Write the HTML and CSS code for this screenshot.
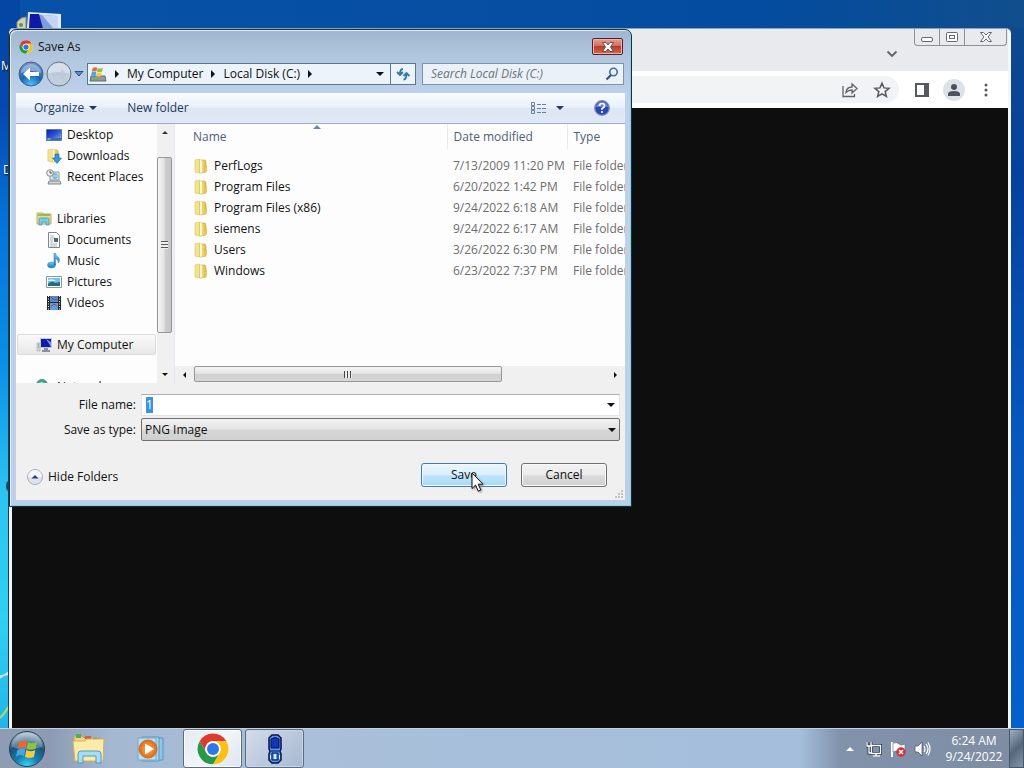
FILE: index.html
```html
<!DOCTYPE html>
<html lang="en">
<head>
    <meta charset="UTF-8">
    <meta name="viewport" content="width=device-width, initial-scale=1.0">
    <title>Save As</title>
    <link rel="stylesheet" href="styles.css">
</head>
<body>
    <!-- shared icons -->
    <svg class="defs" width="0" height="0">
        <defs>
            <linearGradient id="gold" x1="0" x2="1"><stop offset="0" stop-color="#f7eaa0"/><stop offset="1" stop-color="#dcb944"/></linearGradient>
            <linearGradient id="screen" x1="0" x2="1" y2="1"><stop offset="0" stop-color="#0c1cae"/><stop offset=".5" stop-color="#2b55d8"/><stop offset="1" stop-color="#8fb4f0"/></linearGradient>
            <linearGradient id="note" x1="0" y2="1" x2="0"><stop offset="0" stop-color="#7cc4ee"/><stop offset="1" stop-color="#1677c4"/></linearGradient>
            <radialGradient id="blueball" cx=".5" cy=".95" r=".9"><stop offset="0" stop-color="#4fc5f7"/><stop offset=".5" stop-color="#1764b4"/><stop offset="1" stop-color="#6f93c4"/></radialGradient>
            <radialGradient id="orb" cx=".5" cy="1" r=".95"><stop offset="0" stop-color="#35e0f8"/><stop offset=".35" stop-color="#1380b4"/><stop offset=".7" stop-color="#1f5277"/><stop offset="1" stop-color="#a4bccd"/></radialGradient>
            <radialGradient id="orange"><stop offset="0" stop-color="#ffb25c"/><stop offset="1" stop-color="#e06a10"/></radialGradient>
        </defs>
        <symbol id="chrome" viewBox="0 0 48 48">
            <circle cx="24" cy="24" r="23" fill="#fff"/>
            <path d="M4 12.5A23 23 0 0 1 44 12.5H24a11.500 11.500 0 0 0-10 17.250z" fill="#dc3b2d"/>
            <path d="M44 12.500A23 23 0 0 1 24 47l10-17.250A11.500 11.500 0 0 0 24 12.500z" fill="#fbc116"/>
            <path d="M24 47A23 23 0 0 1 4 12.500l10 17.250a11.500 11.500 0 0 0 20 0z" fill="#279847"/>
            <circle cx="24" cy="24" r="11.500" fill="#fff"/>
            <circle cx="24" cy="24" r="9" fill="#2e78e6"/>
        </symbol>
        <symbol id="folder" viewBox="0 0 16 16">
            <path d="M2 2l5-1v14l-5-1z" fill="#f3e38c" stroke="#d9c267" stroke-width=".6"/>
            <path d="M7 2h5l1 2v10l-5 1H7z" fill="url(#gold)" stroke="#c9a844" stroke-width=".6"/>
            <path d="M7 1v14l2-1V3z" fill="#fff8c8"/>
            <path d="M13 7l1 .5V13l-3 1z" fill="#e4ca59"/>
        </symbol>
        <symbol id="flag" viewBox="0 0 24 24">
            <path d="M3 6Q7 2.500 11.500 5L10 12Q6 9.500 1.500 12.500z" fill="#ee6432"/>
            <path d="M12.500 5.500Q17 8 22 5L20.500 12Q16 14.500 11 12z" fill="#8bc43f"/>
            <path d="M1.300 14Q5.500 10.500 9.800 13.200L8.300 20Q4 17.500 0 20.500z" fill="#45a6e4"/>
            <path d="M10.800 13.500Q15.500 16 20.200 13.500L18.700 20.500Q14 23 9.300 20.500z" fill="#fdc93a"/>
        </symbol>
        <symbol id="computer" viewBox="0 0 16 16">
            <path d="M1 6h3v8H1z" fill="#d8d8d2" stroke="#999" stroke-width=".5"/>
            <path d="M2 8h1M2 10h1" stroke="#4a9"/>
            <path d="M4.500 1.500h11v9h-11z" fill="#101ca8" stroke="#c3c9da"/>
            <path d="M10 2l5 3v5z" fill="#6f93ea"/>
            <path d="M8 11h4v2h2v2H6v-2h2z" fill="#8a90a8"/>
        </symbol>
    </svg>

    <div class="desktop">
        <div class="shortcut shortcut-computer">
            <svg width="48" height="40" viewBox="0 0 48 40">
                <path d="M2 13q4-5 9-5v25H2z" fill="#d5d3b5" stroke="#8c8c78"/>
                <circle cx="6" cy="16" r="2" fill="#5c9b43"/>
                <path d="M13 3l33 2v30H11z" fill="#dfeaf8"/>
                <path d="M15 5l28 2v27H13z" fill="#7e9de0"/>
                <path d="M15 5h9l8 29H13z" fill="#1018a4"/>
                <path d="M27 6l16 1v18z" fill="#c6d5f4"/>
            </svg>
        </div>
        <span class="shortcut shortcut-label label-m">M</span>
        <span class="shortcut shortcut-label label-d">D</span>
        <span class="shortcut shortcut-dot"></span>
        <svg class="wallpaper-streaks" width="10" height="70" viewBox="0 0 10 70"><path d="M0 14L10 7M0 12L10 10" stroke="#b9efff" stroke-width="1.500"/><path d="M0 54Q6 48 10 40" stroke="#a0e070" stroke-width="2" fill="none"/></svg>

        <!-- browser behind the dialog -->
        <section class="browser">
            <header class="browser-tabs">
                <button class="tab-search" aria-label="Search tabs"><svg width="12" height="8" viewBox="0 0 12 8"><path d="M1.500 1.500L6 6l4.500-4.500" fill="none" stroke="#5f6368" stroke-width="1.800"/></svg></button>
                <div class="caption">
                    <button aria-label="Minimize"><svg width="14" height="12" viewBox="0 0 14 12"><rect x="1.500" y="6.500" width="11" height="4" rx="1.500" fill="#fff" stroke="#606874"/></svg></button>
                    <button aria-label="Restore"><svg width="14" height="12" viewBox="0 0 14 12"><rect x="1.500" y="1.500" width="11" height="9" rx="1" fill="#fff" stroke="#606874"/><rect x="4.500" y="4.500" width="5" height="3" fill="#fff" stroke="#606874"/></svg></button>
                    <button class="caption-close" aria-label="Close"><svg width="14" height="12" viewBox="0 0 14 12"><path d="M1.500 1.500h3L7 4l2.500-2.500h3L9 6l3.500 4.500h-3L7 8l-2.500 2.500h-3L5 6z" fill="#fff" stroke="#606874"/></svg></button>
                </div>
            </header>
            <div class="browser-toolbar">
                <div class="omnibox">
                    <button aria-label="Share"><svg width="18" height="18" viewBox="0 0 18 18" fill="none" stroke="#5f6368" stroke-width="1.300"><path d="M2 5v10.500h11.500V13M5 11.500Q5.500 6 11 6V3l5 4.500-5 4.500V9Q7.500 9 5 11.500z"/></svg></button>
                    <button aria-label="Bookmark"><svg width="18" height="18" viewBox="0 0 18 18"><path d="M9 2.200l2 4.700 5 .4-3.800 3.300 1.200 4.900L9 12.900l-4.400 2.600 1.200-4.900L2 7.300l5-.4z" fill="none" stroke="#55595e" stroke-width="1.500"/></svg></button>
                </div>
                <button aria-label="Side panel"><svg width="14" height="14" viewBox="0 0 14 14"><path d="M0 0h14v14H0zM2 2v10h7V2z" fill="#55595e" fill-rule="evenodd"/></svg></button>
                <button class="profile" aria-label="Profile"><svg width="14" height="14" viewBox="0 0 14 14" fill="#4c525c"><circle cx="7" cy="4" r="3"/><path d="M1 13v-2q0-3 6-3t6 3v2z"/></svg></button>
                <button class="menu" aria-label="Menu"><svg width="4" height="14" viewBox="0 0 4 14" fill="#55595e"><circle cx="2" cy="2" r="1.500"/><circle cx="2" cy="7" r="1.500"/><circle cx="2" cy="12" r="1.500"/></svg></button>
            </div>
            <div class="browser-page"></div>
        </section>

        <!-- save dialog -->
        <form class="dialog" onsubmit="return false">
            <header class="title-bar">
                <svg width="14" height="14"><use href="#chrome"/></svg>
                <span class="title">Save As</span>
                <button type="button" class="close" aria-label="Close"><svg width="14" height="12" viewBox="0 0 14 12"><path d="M1.500 1.500h3.500l2 2.500 2-2.500h3.500L9.500 6l3 4.500H9L7 8l-2 2.500H1.500l3-4.500z" fill="#fff" stroke="#5c3a3a" stroke-width=".8"/></svg></button>
            </header>

            <nav class="nav-bar">
                <div class="travel">
                    <button type="button" aria-label="Back"><svg width="26" height="26" viewBox="0 0 26 26"><circle cx="13" cy="13" r="12" fill="url(#blueball)" stroke="#47617f"/><path d="M3 12a10 9 0 0 1 20 0Q13 8 3 12z" fill="#fff" opacity=".35"/><path d="M5 13l7-6.500v4.500h9v4h-9v4.500z" fill="#fff"/></svg></button>
                    <button type="button" aria-label="Forward"><svg width="26" height="26" viewBox="0 0 26 26"><circle cx="13" cy="13" r="12" fill="#c1cedb" stroke="#65768a"/><path d="M2 12a11 10 0 0 1 22 0z" fill="#dbe4ee" opacity=".8"/><path d="M21 13l-6-5v3H6v4h9v3z" fill="#b7c5d3" opacity=".6"/></svg></button>
                    <button type="button" aria-label="Recent pages"><svg width="10" height="8" viewBox="0 0 10 8"><path d="M1 1.500h8L5 6z" fill="#5b93c8" stroke="#234f85"/></svg></button>
                </div>
                <div class="address">
                    <svg width="18" height="18" viewBox="0 0 18 18"><path d="M2 11h14l1 5H1z" fill="#8e9b9f" stroke="#5f6c70"/><path d="M3 14h6" stroke="#4fc053"/><svg x="2" y="0" width="13" height="13"><use href="#flag"/></svg></svg>
                    <i class="arrow-right"></i>
                    <a href="#">My Computer</a>
                    <i class="arrow-right"></i>
                    <a href="#">Local Disk (C:)</a>
                    <i class="arrow-right"></i>
                    <button type="button" class="history" aria-label="Previous locations"><i class="arrow-down"></i></button>
                    <button type="button" class="refresh" aria-label="Refresh"><svg width="14" height="14" viewBox="0 0 14 14" fill="none" stroke="#3176ad" stroke-width="1.800"><path d="M7 2Q4 2 4 7.500M1 5L4 8 7 5"/><path d="M7.500 12.500q3 0 3-6M7.500 9l3-3 3 3"/></svg></button>
                </div>
                <div class="search">
                    <input type="text" placeholder="Search Local Disk (C:)" aria-label="Search Local Disk (C:)">
                    <svg width="14" height="14" viewBox="0 0 14 14" fill="none"><circle cx="8.500" cy="5" r="3.700" stroke="#426b9e" stroke-width="1.600"/><path d="M6 8l-4.500 4.500" stroke="#355378" stroke-width="2.200"/></svg>
                </div>
            </nav>

            <div class="client">
                <div class="toolbar">
                    <button type="button">Organize <i class="arrow-down"></i></button>
                    <button type="button">New folder</button>
                    <button type="button" class="view" aria-label="Change your view">
                        <svg width="16" height="14" viewBox="0 0 16 14" fill="none" stroke="#6f7f95"><path d="M.5 1.500h3v3h-3zM.5 5.500h3v3h-3zM.5 9.500h3v3h-3z"/><path d="M6 3.500h4M11 3.500h4M6 7.500h4M11 7.500h4M6 11.500h4M11 11.500h4"/></svg>
                        <i class="arrow-down"></i>
                    </button>
                    <button type="button" class="help" aria-label="Help"><svg width="16" height="16" viewBox="0 0 16 16"><circle cx="8" cy="8" r="7.300" fill="#2947b8" stroke="#7f8fb5" stroke-width="1.300"/><path d="M2 7a6 5 0 0 1 12 0z" fill="#93a6e4" opacity=".6"/><path d="M5.500 6q0-2.500 2.500-2.500t2.500 2.200Q10.500 7.500 8 8.500v1.200" fill="none" stroke="#fff" stroke-width="1.700"/><circle cx="8" cy="12" r="1.100" fill="#fff"/></svg></button>
                </div>

                <div class="panes">
                    <ul class="tree">
                        <li class="child"><svg width="16" height="16" viewBox="0 0 16 16"><path d="M.5 2.500h15v11H.5z" fill="url(#screen)" stroke="#5878a8"/><path d="M1 11h14v2H1z" fill="#3e6aa9"/><path d="M1.500 12h3" stroke="#a8e0ef"/></svg><a href="#">Desktop</a></li>
                        <li class="child"><svg width="16" height="16" viewBox="0 0 16 16"><use href="#folder" width="15" height="15"/><path d="M9 6h4v4h2.500L11 15.500 6.500 10H9z" fill="#3695dc" stroke="#1b62a4" stroke-width=".6"/></svg><a href="#">Downloads</a></li>
                        <li class="child"><svg width="16" height="16" viewBox="0 0 16 16"><path d="M4 3h9v8H4z" fill="#dff1f6" stroke="#8498a5"/><path d="M7 5h4v4H7zM9 4v6" stroke="#59abc4" fill="none"/><path d="M3 12h11l1 3H2z" fill="#d2d2d2" stroke="#888"/><circle cx="4" cy="4" r="3.300" fill="#eee" stroke="#8c8c8c"/><path d="M4 2v2h2" stroke="#555" fill="none"/></svg><a href="#">Recent Places</a></li>
                        <li class="spacer"></li>
                        <li><svg width="16" height="16" viewBox="0 0 16 16"><path d="M1 2h6l1 1h7v10H1z" fill="#f1dc85" stroke="#c9ad4a"/><path d="M2 4h12" stroke="#69b363" stroke-width="1.500"/><path d="M3 14V8q0-1 1-1h8q1 0 1 1v6h-3v-3H6v3z" fill="#78cdeb" stroke="#398fb6" stroke-width=".7"/></svg><a href="#">Libraries</a></li>
                        <li class="child"><svg width="16" height="16" viewBox="0 0 16 16"><path d="M2.500.5h8l3 3v12h-11z" fill="#fff" stroke="#7d8790"/><path d="M4 4h4M4 6h5M4 8h3M4 10h3M4 12h7M4 14h7" stroke="#8ea0af" stroke-width=".8"/><path d="M8 6h4v4H8z" fill="#56646a"/></svg><a href="#">Documents</a></li>
                        <li class="child"><svg width="16" height="16" viewBox="0 0 16 16"><ellipse cx="5.500" cy="12" rx="4" ry="3" fill="url(#note)" stroke="#2b7fba" stroke-width=".5"/><path d="M8 0h1.500q0 3 3 4.500 2 2 0 5.500 0-3-3-4.500V12H8z" fill="url(#note)" stroke="#2b7fba" stroke-width=".5"/></svg><a href="#">Music</a></li>
                        <li class="child"><svg width="16" height="16" viewBox="0 0 16 16"><path d="M.5 2.500h15v11H.5z" fill="#fff" stroke="#85999f"/><path d="M2 4h12v8H2z" fill="#75c0e5"/><path d="M2 10q4-4 7-1l5-1v4H2z" fill="#246d80"/><path d="M2 6q5-2 8 1H2z" fill="#dff4fb"/></svg><a href="#">Pictures</a></li>
                        <li class="child"><svg width="16" height="16" viewBox="0 0 16 16"><path d="M1 1h14v14H1z" fill="#20262f"/><path d="M4 1h8v6H4z" fill="#4c8dd0"/><path d="M4 8h8v7H4z" fill="#5fa0d9"/><path d="M5 2l3 3 4-1M5 12l3-3 3 2" stroke="#a33e54" fill="none"/><path d="M2.500 1v14M13.500 1v14" stroke="#fff" stroke-dasharray="1 1.500"/></svg><a href="#">Videos</a></li>
                        <li class="spacer"></li>
                        <li class="selected"><svg width="16" height="16"><use href="#computer"/></svg><a href="#">My Computer</a></li>
                        <li class="spacer"></li>
                        <li><svg width="16" height="16" viewBox="0 0 16 16"><circle cx="6" cy="6" r="5.500" fill="#36a98d" stroke="#4b8f86"/><path d="M3 4q3-2 5 0L5 8z" fill="#a8e3bd"/><path d="M8 6h7v6H8z" fill="#2d60c4"/></svg><a href="#">Network</a></li>
                    </ul>
                    <div class="vscroll">
                        <button type="button" aria-label="Scroll up"><i class="arrow-up"></i></button>
                        <div class="thumb"><i class="grip"></i></div>
                        <button type="button" class="end" aria-label="Scroll down"><i class="arrow-down"></i></button>
                    </div>
                    <div class="files">
                        <div class="files-view">
                            <table>
                                <thead>
                                    <tr><th class="col-name">Name</th><th class="col-date">Date modified</th><th class="col-type">Type</th></tr>
                                </thead>
                                <tbody>
                                    <tr><td><svg width="16" height="16"><use href="#folder"/></svg>PerfLogs</td><td>7/13/2009 11:20 PM</td><td>File folder</td></tr>
                                    <tr><td><svg width="16" height="16"><use href="#folder"/></svg>Program Files</td><td>6/20/2022 1:42 PM</td><td>File folder</td></tr>
                                    <tr><td><svg width="16" height="16"><use href="#folder"/></svg>Program Files (x86)</td><td>9/24/2022 6:18 AM</td><td>File folder</td></tr>
                                    <tr><td><svg width="16" height="16"><use href="#folder"/></svg>siemens</td><td>9/24/2022 6:17 AM</td><td>File folder</td></tr>
                                    <tr><td><svg width="16" height="16"><use href="#folder"/></svg>Users</td><td>3/26/2022 6:30 PM</td><td>File folder</td></tr>
                                    <tr><td><svg width="16" height="16"><use href="#folder"/></svg>Windows</td><td>6/23/2022 7:37 PM</td><td>File folder</td></tr>
                                </tbody>
                            </table>
                            <i class="sort-mark"></i>
                        </div>
                        <div class="hscroll">
                            <button type="button" aria-label="Scroll left"><i class="arrow-left"></i></button>
                            <div class="thumb"><i class="grip"></i></div>
                            <button type="button" class="end" aria-label="Scroll right"><i class="arrow-right"></i></button>
                        </div>
                    </div>
                </div>

                <div class="fields">
                    <label for="file-name">File name:</label>
                    <div class="combo">
                        <input type="text" id="file-name" value="1">
                        <button type="button" aria-label="Previous names"><i class="arrow-down"></i></button>
                    </div>
                    <label for="file-type">Save as type:</label>
                    <div class="combo combo-type">
                        <select id="file-type"><option>PNG Image</option></select>
                        <i class="arrow-down"></i>
                    </div>
                </div>

                <footer class="actions">
                    <button type="button" class="hide-folders"><svg width="16" height="16" viewBox="0 0 16 16"><circle cx="8" cy="8" r="7.500" fill="#dfe3ec" stroke="#a9afbe"/><path d="M1 8a7 7 0 0 1 14 0z" fill="#f6f7fb"/><path d="M4.500 9.500L8 6l3.500 3.500z" fill="#2f3d6b"/></svg>Hide Folders</button>
                    <button type="submit" class="push primary">Save</button>
                    <button type="button" class="push">Cancel</button>
                </footer>
            </div>
            <svg class="size-grip" width="9" height="9" viewBox="0 0 9 9" fill="#c4c4c4"><path d="M6 0h2v2H6zM3 3h2v2H3zM6 3h2v2H6zM0 6h2v2H0zM3 6h2v2H3zM6 6h2v2H6z"/></svg>
        </form>

        <svg class="cursor" width="14" height="21" viewBox="0 0 14 21"><path d="M1 1v15.500l3.600-3.400 2.600 6 2.600-1.100-2.600-5.800H12z" fill="#fff" stroke="#111"/></svg>
    </div>

    <div class="taskbar">
        <button class="start" aria-label="Start"><svg width="38" height="38" viewBox="0 0 38 38"><circle cx="19" cy="19" r="17.500" fill="url(#orb)" stroke="#274050"/><path d="M4 17a15 14 0 0 1 30 0Q19 22 4 17z" fill="#fff" opacity=".25"/><svg x="8" y="7" width="23" height="23"><use href="#flag"/></svg></svg></button>
        <button class="task" aria-label="Explorer"><svg width="36" height="32" viewBox="0 0 36 32">
            <path d="M3 3h8l2 2h18v23H3z" fill="#eed47a" stroke="#bfa04c"/><path d="M5 1h5v4H5z" fill="#4fae58"/><path d="M14 3h6v3h-6z" fill="#e05b40"/><path d="M22 5h6v3h-6z" fill="#4a8ed8"/>
            <path d="M2 8h12l2-2h17l-1 22H4z" fill="#faeba9" stroke="#cfb465"/><path d="M7 30v-9q0-3 3-3h17q3 0 3 3v9h-5v-7H12v7z" fill="#a8dcf4" stroke="#4f9ac4"/></svg></button>
        <button class="task" aria-label="Media Player"><svg width="30" height="28" viewBox="0 0 30 28"><path d="M10 3h17v22H10z" fill="#8fc6e8" stroke="#5898bf"/><path d="M6 2h17v24H6z" fill="#a9d5ef" stroke="#5898bf"/><path d="M2 3h18v22H2z" fill="#bddff2" stroke="#72a8c8"/><circle cx="12" cy="14" r="9" fill="url(#orange)" stroke="#c86c23"/><path d="M9 8.500l9 5.500-9 5.500z" fill="#fff"/></svg></button>
        <button class="task active" aria-label="Chrome"><svg width="32" height="32"><use href="#chrome"/></svg></button>
        <button class="task open" aria-label="Phone"><svg width="16" height="30" viewBox="0 0 16 30"><path d="M5 1h6l3 3v11l-1 2 1 3v6l-3 3H5l-3-3v-6l1-3-1-2V4z" fill="#4f9af5" stroke="#08114c" stroke-width="1.500"/><path d="M4 5q4-3 8 0v9H4z" fill="#1634b4" stroke="#08114c"/><path d="M4 17h8M5 19h6v7H5z" stroke="#08114c" fill="none"/><path d="M8 20v5" stroke="#dff0ff" stroke-width="2"/><path d="M3.500 21v4M12.500 21v4" stroke="#dff0ff"/></svg></button>
        <div class="tray">
            <button aria-label="Show hidden icons"><svg width="8" height="5" viewBox="0 0 8 5"><path d="M0 5l4-4 4 4z" fill="#fff"/></svg></button>
            <svg width="16" height="16" viewBox="0 0 16 16" fill="none"><path d="M5.500 4.500h9v8h-9zM7 15h7M10 13v2M1 1v4h4V1M3 5v7h2" stroke="#2b3b4c" stroke-width="3"/><path d="M5.500 4.500h9v8h-9zM7 15h7M10 13v2M1 1v4h4V1M3 5v7h2" stroke="#fff" stroke-width="1.300"/></svg>
            <svg width="16" height="16" viewBox="0 0 16 16"><path d="M2 1v15" stroke="#fff" stroke-width="2"/><path d="M3 2q4-1 6 1t6 0v8q-4 2-6 0t-6 0z" fill="#fff" stroke="#59697b" stroke-width=".6"/><circle cx="11" cy="11" r="4.700" fill="#d82c36"/><path d="M9 9l4 4M13 9l-4 4" stroke="#fff" stroke-width="1.500"/></svg>
            <svg width="17" height="16" viewBox="0 0 17 16" fill="none"><path d="M1 5h3l4-4v14l-4-4H1z" fill="#fff" stroke="#3c4c5e" stroke-width=".7"/><path d="M10 5q2 3 0 6M12 3q4 5 0 10M14 1.500q4 6.500 0 13" stroke="#fff" stroke-width="1.200"/></svg>
            <div class="clock"><time>6:24 AM</time><time>9/24/2022</time></div>
        </div>
        <button class="show-desktop" aria-label="Show desktop"></button>
    </div>

    <script>
        // the suggested name starts selected
        document.getElementById('file-name').select();
    </script>
</body>
</html>
```

FILE: styles.css
```css
* {
    box-sizing: border-box;
}
body {
    margin: 0;
    height: 100vh;
    display: flex;
    flex-direction: column;
    overflow: hidden;
    font-family: "Open Sans", "Noto Sans", sans-serif;
    font-size: 12px;
    line-height: 16px;
    color: #111;
}
button, input, select {
    font: inherit;
    color: inherit;
}
button {
    display: flex;
    align-items: center;
    justify-content: center;
    padding: 0;
    border: none;
    background: none;
}
a {
    color: inherit;
    text-decoration: none;
}
svg {
    display: block;
    flex: none;
}
.defs {
    position: absolute;
}

/* small triangles */
.arrow-down, .arrow-up, .arrow-left, .arrow-right {
    display: inline-block;
    flex: none;
    border: 4px solid transparent;
}
.arrow-down {
    border-top-color: #111;
    border-bottom: 0;
}
.arrow-up {
    border-bottom-color: #333;
    border-top: 0;
}
.arrow-left {
    border-right-color: #111;
    border-left: 0;
}
.arrow-right {
    border-left-color: #111;
    border-right: 0;
}

/* desktop */
.desktop {
    position: relative;
    flex: 1;
    overflow: hidden;
    background:
        linear-gradient(90deg, transparent 20px, #0752a8 20px, #044c9f 75%, #104e8c) 0 0 / 100% 28px no-repeat,
        linear-gradient(#0e4a88, #0542a0 25%, #0757bd 60%, #0560cc) 100% 0 / 50% 100% no-repeat,
        linear-gradient(#0446a2, #0548b2 15%, #0672d8 30%, #0a90e8 50%, #2cc4f0 68%, #30d0f2 85%, #24b4ea);
}
.shortcut {
    position: absolute;
}
.shortcut-computer {
    left: 15px;
    top: 9px;
}
.shortcut-label {
    color: #fff;
    text-shadow: 1px 1px 2px #000;
}
.label-m {
    left: 1px;
    top: 58px;
}
.label-d {
    left: 3px;
    top: 162px;
}
.shortcut-dot {
    left: 6px;
    top: 480px;
    width: 10px;
    height: 12px;
    border-radius: 5px;
    background: #0d4a74;
}
.wallpaper-streaks {
    position: absolute;
    left: 0;
    top: 664px;
}

/* browser window */
.browser {
    position: absolute;
    left: 8px;
    right: 13px;
    top: 28px;
    bottom: 0;
    display: flex;
    flex-direction: column;
    padding: 0 3px;
    border: 1px solid #1a3d60;
    border-top-color: #8fa2b8;
    border-bottom: none;
    border-right: none;
    border-radius: 5px 5px 0 0;
    background: #f4f6f8;
}
.browser-tabs {
    display: flex;
    align-items: flex-start;
    justify-content: flex-end;
    gap: 16px;
    height: 42px;
    background: #e8eaed;
}
.tab-search {
    margin-top: 21px;
}
.caption {
    display: flex;
    margin-right: 1px;
    border: 1px solid #8b929b;
    border-top: none;
    border-radius: 0 0 4px 4px;
}
.caption button {
    width: 25px;
    height: 16px;
    border-right: 1px solid #8b929b;
}
.caption .caption-close {
    width: 41px;
    border: none;
}
.browser-toolbar {
    display: flex;
    align-items: center;
    gap: 14px;
    height: 37px;
    padding-right: 20px;
    background: #fff;
}
.omnibox {
    flex: 1;
    display: flex;
    align-items: center;
    justify-content: flex-end;
    gap: 14px;
    height: 27px;
    margin-right: 2px;
    padding-right: 8px;
    border-radius: 14px;
    background: #f1f3f4;
}
.profile {
    width: 22px;
    height: 22px;
    border-radius: 50%;
    background: #dde1ea;
}
.menu {
    margin-left: 5px;
}
.browser-page {
    flex: 1;
    background: #0e0e0e;
}

/* dialog window */
.dialog {
    position: absolute;
    left: 9px;
    top: 29px;
    width: 623px;
    padding: 0 6px 6px;
    border: 1px solid #18303c;
    border-radius: 7px 7px 0 0;
    background: linear-gradient(#9fb6d0, #b3c8e0 30px, #bdd2ea 65px, #bdd0e8);
    box-shadow: inset 1px 1px #e4eef8, inset -1px -1px #7fd0e8;
}
.title-bar {
    display: flex;
    align-items: center;
    gap: 5px;
    height: 33px;
    padding: 0 2px 0 3px;
}
.title {
    flex: 1;
}
.close {
    width: 31px;
    height: 17px;
    border: 1px solid #5b1e22;
    border-radius: 2px;
    background: linear-gradient(#e0a095, #cf6d5e 48%, #b93a2a 50%, #cd6a52);
    box-shadow: inset 0 0 0 1px #e9b4a9;
}
.nav-bar {
    display: flex;
    align-items: center;
    gap: 6px;
    height: 22px;
    margin-bottom: 8px;
    padding-right: 1px;
}
.travel {
    display: flex;
    align-items: center;
    gap: 2px;
    width: 65px;
    padding-left: 2px;
}
.address {
    flex: 1;
    display: flex;
    align-items: center;
    gap: 8px;
    height: 22px;
    padding-left: 1px;
    border: 1px solid #5b7790;
    background: #edf3fa;
}
.history {
    margin-left: auto;
    margin-right: -2px;
}
.refresh {
    width: 25px;
    height: 20px;
    border-left: 1px solid #5b7790;
}
.search {
    display: flex;
    align-items: center;
    width: 202px;
    height: 22px;
    padding: 0 4px 0 8px;
    border: 1px solid #7b94ab;
    background: #eaf1f9;
}
.search input {
    flex: 1;
    min-width: 0;
    padding: 0;
    border: none;
    outline: none;
    background: none;
}
.search input::placeholder {
    color: #6d7277;
    font-style: italic;
}
.client {
    background: #f0f0f0;
}
.toolbar {
    display: flex;
    align-items: center;
    height: 31px;
    padding: 0 15px 0 18px;
    border-bottom: 1px solid #a0afc3;
    background: linear-gradient(#fafcfe, #e8f0fa 48%, #dce6f4 52%, #dfe9f6);
    color: #1e395b;
}
.toolbar button {
    gap: 5px;
    margin-right: 30px;
}
.toolbar .arrow-down {
    border-top-color: #1e395b;
}
.toolbar .view {
    gap: 9px;
    margin-left: auto;
}
.toolbar .help {
    margin-right: 0;
}

/* panes */
.panes {
    display: flex;
    height: 259px;
    background: #fdfdfd;
}
.tree {
    width: 141px;
    margin: 0;
    padding: 0;
    overflow: hidden;
    list-style: none;
}
.tree li {
    display: flex;
    align-items: center;
    gap: 5px;
    height: 21px;
    margin: 0 1px;
    padding-left: 19px;
}
.tree .child {
    padding-left: 29px;
}
.tree .selected {
    padding-left: 18px;
    border: 1px solid #dcdcdc;
    border-radius: 2px;
    background: linear-gradient(#fafafa, #e8e8e8);
}
.vscroll {
    display: flex;
    flex-direction: column;
    width: 18px;
    padding-right: 2px;
    border-right: 1px solid #e3e9f0;
    background: #f0f0f0;
}
.vscroll button {
    height: 17px;
}
.vscroll i, .hscroll i {
    border-width: 3px;
}
.vscroll .thumb {
    height: 176px;
    margin-top: 16px;
    border: 1px solid #979797;
    border-radius: 2px;
    background: linear-gradient(90deg, #f4f4f4, #e3e3e3 48%, #cfcfcf 52%, #c4c4c4);
}
.thumb {
    display: flex;
    align-items: center;
    justify-content: center;
}
.vscroll .end {
    margin-top: auto;
}
.grip {
    width: 7px;
    height: 8px;
    background: repeating-linear-gradient(#555 0 1px, #eee 1px 3px);
}
.hscroll .grip {
    width: 8px;
    height: 7px;
    background: repeating-linear-gradient(90deg, #444 0 1px, #eee 1px 3px);
}
.files {
    flex: 1;
    min-width: 0;
    display: flex;
    flex-direction: column;
}
.files-view {
    position: relative;
    flex: 1;
    overflow: hidden;
}
.files table {
    width: 520px;
    table-layout: fixed;
    border-collapse: collapse;
    color: #6d6d6d;
}
.files th {
    height: 25px;
    padding: 0 6px;
    border-right: 1px solid #e6e9ed;
    font-weight: normal;
    text-align: left;
    color: #4c607a;
}
.files .col-name {
    width: 272px;
    padding-left: 18px;
}
.files .col-date {
    width: 120px;
}
.files tbody::before {
    content: "";
    display: block;
    height: 6px;
}
.files td {
    height: 21px;
    padding: 0 6px;
    white-space: nowrap;
}
.files td:first-child {
    padding-left: 18px;
    color: #111;
}
.files td svg {
    display: inline-block;
    margin-right: 5px;
    vertical-align: top;
}
.sort-mark {
    position: absolute;
    left: 138px;
    top: 1px;
    border: 4px solid transparent;
    border-top: 0;
    border-bottom-color: #71879c;
}
.hscroll {
    display: flex;
    height: 17px;
    background: #f0f0f0;
}
.hscroll button {
    width: 19px;
}
.hscroll .thumb {
    width: 308px;
    height: 16px;
    border: 1px solid #979797;
    border-radius: 2px;
    background: linear-gradient(#f4f4f4, #e3e3e3 48%, #cfcfcf 52%, #d8d8d8);
}
.hscroll .end {
    margin-left: auto;
}

/* name and type */
.fields {
    display: grid;
    grid-template-columns: 120px 1fr;
    align-items: center;
    gap: 2px 5px;
    padding: 11px 5px 0 0;
}
.fields label {
    text-align: right;
}
.combo {
    display: flex;
    align-items: center;
    height: 22px;
    padding: 0 4px;
    border: 1px solid #e2e3ea;
    border-top-color: #abadb3;
    background: #fff;
}
.combo input {
    flex: 1;
    padding: 0;
    border: none;
    outline: none;
    background: none;
}
.combo input::selection {
    background: #3b93e8;
    color: #fff;
}
.combo-type {
    height: 23px;
    padding: 0 3px;
    border: 1px solid #707070;
    border-radius: 2px;
    background: linear-gradient(#f0f0f0, #e6e6e6 48%, #d6d6d6 52%, #d0d0d0);
}
.combo-type select {
    flex: 1;
    appearance: none;
    padding: 0;
    border: none;
    background: none;
}
.actions {
    display: flex;
    gap: 14px;
    padding: 22px 18px 13px 11px;
}
.hide-folders {
    gap: 5px;
    margin-right: auto;
    padding-top: 4px;
}
.push {
    width: 86px;
    height: 24px;
    border: 1px solid #707070;
    border-radius: 3px;
    background: linear-gradient(#f2f2f2, #ebebeb 48%, #dddddd 50%, #cfcfcf);
    box-shadow: inset 0 0 0 1px #fafafa;
}
.primary {
    border-color: #3c7fb1;
    background: linear-gradient(#eaf6fd, #d9f0fc 48%, #bee6fd 50%, #a7d9f5);
}
.size-grip {
    position: absolute;
    right: 7px;
    bottom: 7px;
}
.cursor {
    position: absolute;
    left: 471px;
    top: 472px;
    filter: drop-shadow(1px 1px 1px #888);
}

/* taskbar */
.taskbar {
    display: flex;
    align-items: center;
    height: 40px;
    border-top: 1px solid #c4d0df;
    background: linear-gradient(90deg, #8e9db4, #8c9bb3 50px, #a4b8d2 110px, #a9bfda 300px, #a4bedb 800px, #8192ab 840px, #7e8da3);
    box-shadow: 0 -1px #3a4654;
}
.start {
    width: 54px;
    margin-right: 5px;
}
.task {
    width: 59px;
    height: 39px;
    margin-right: 3px;
    border: 1px solid transparent;
    border-radius: 3px;
}
.active {
    border-color: #5b6b80;
    background: linear-gradient(135deg, #e4eaf2, #f2f5f9 50%, #dde5ef);
    box-shadow: inset 0 0 0 1px #fff;
}
.open {
    border-color: #5b6b80;
    background: linear-gradient(135deg, #d3dcea, #a7b8d1);
    box-shadow: inset 0 0 0 1px #c8d6e6;
}
.tray {
    display: flex;
    align-items: center;
    gap: 8px;
    margin-left: auto;
    color: #fff;
}
.tray button {
    margin-right: 4px;
}
.clock {
    display: flex;
    flex-direction: column;
    align-items: center;
    width: 66px;
    margin-left: 2px;
}
.show-desktop {
    width: 15px;
    height: 39px;
    margin-left: 2px;
    border: 1px solid #47566a;
    background: linear-gradient(135deg, #9fb0c2, #56677b 50%, #8293a7);
}
```
